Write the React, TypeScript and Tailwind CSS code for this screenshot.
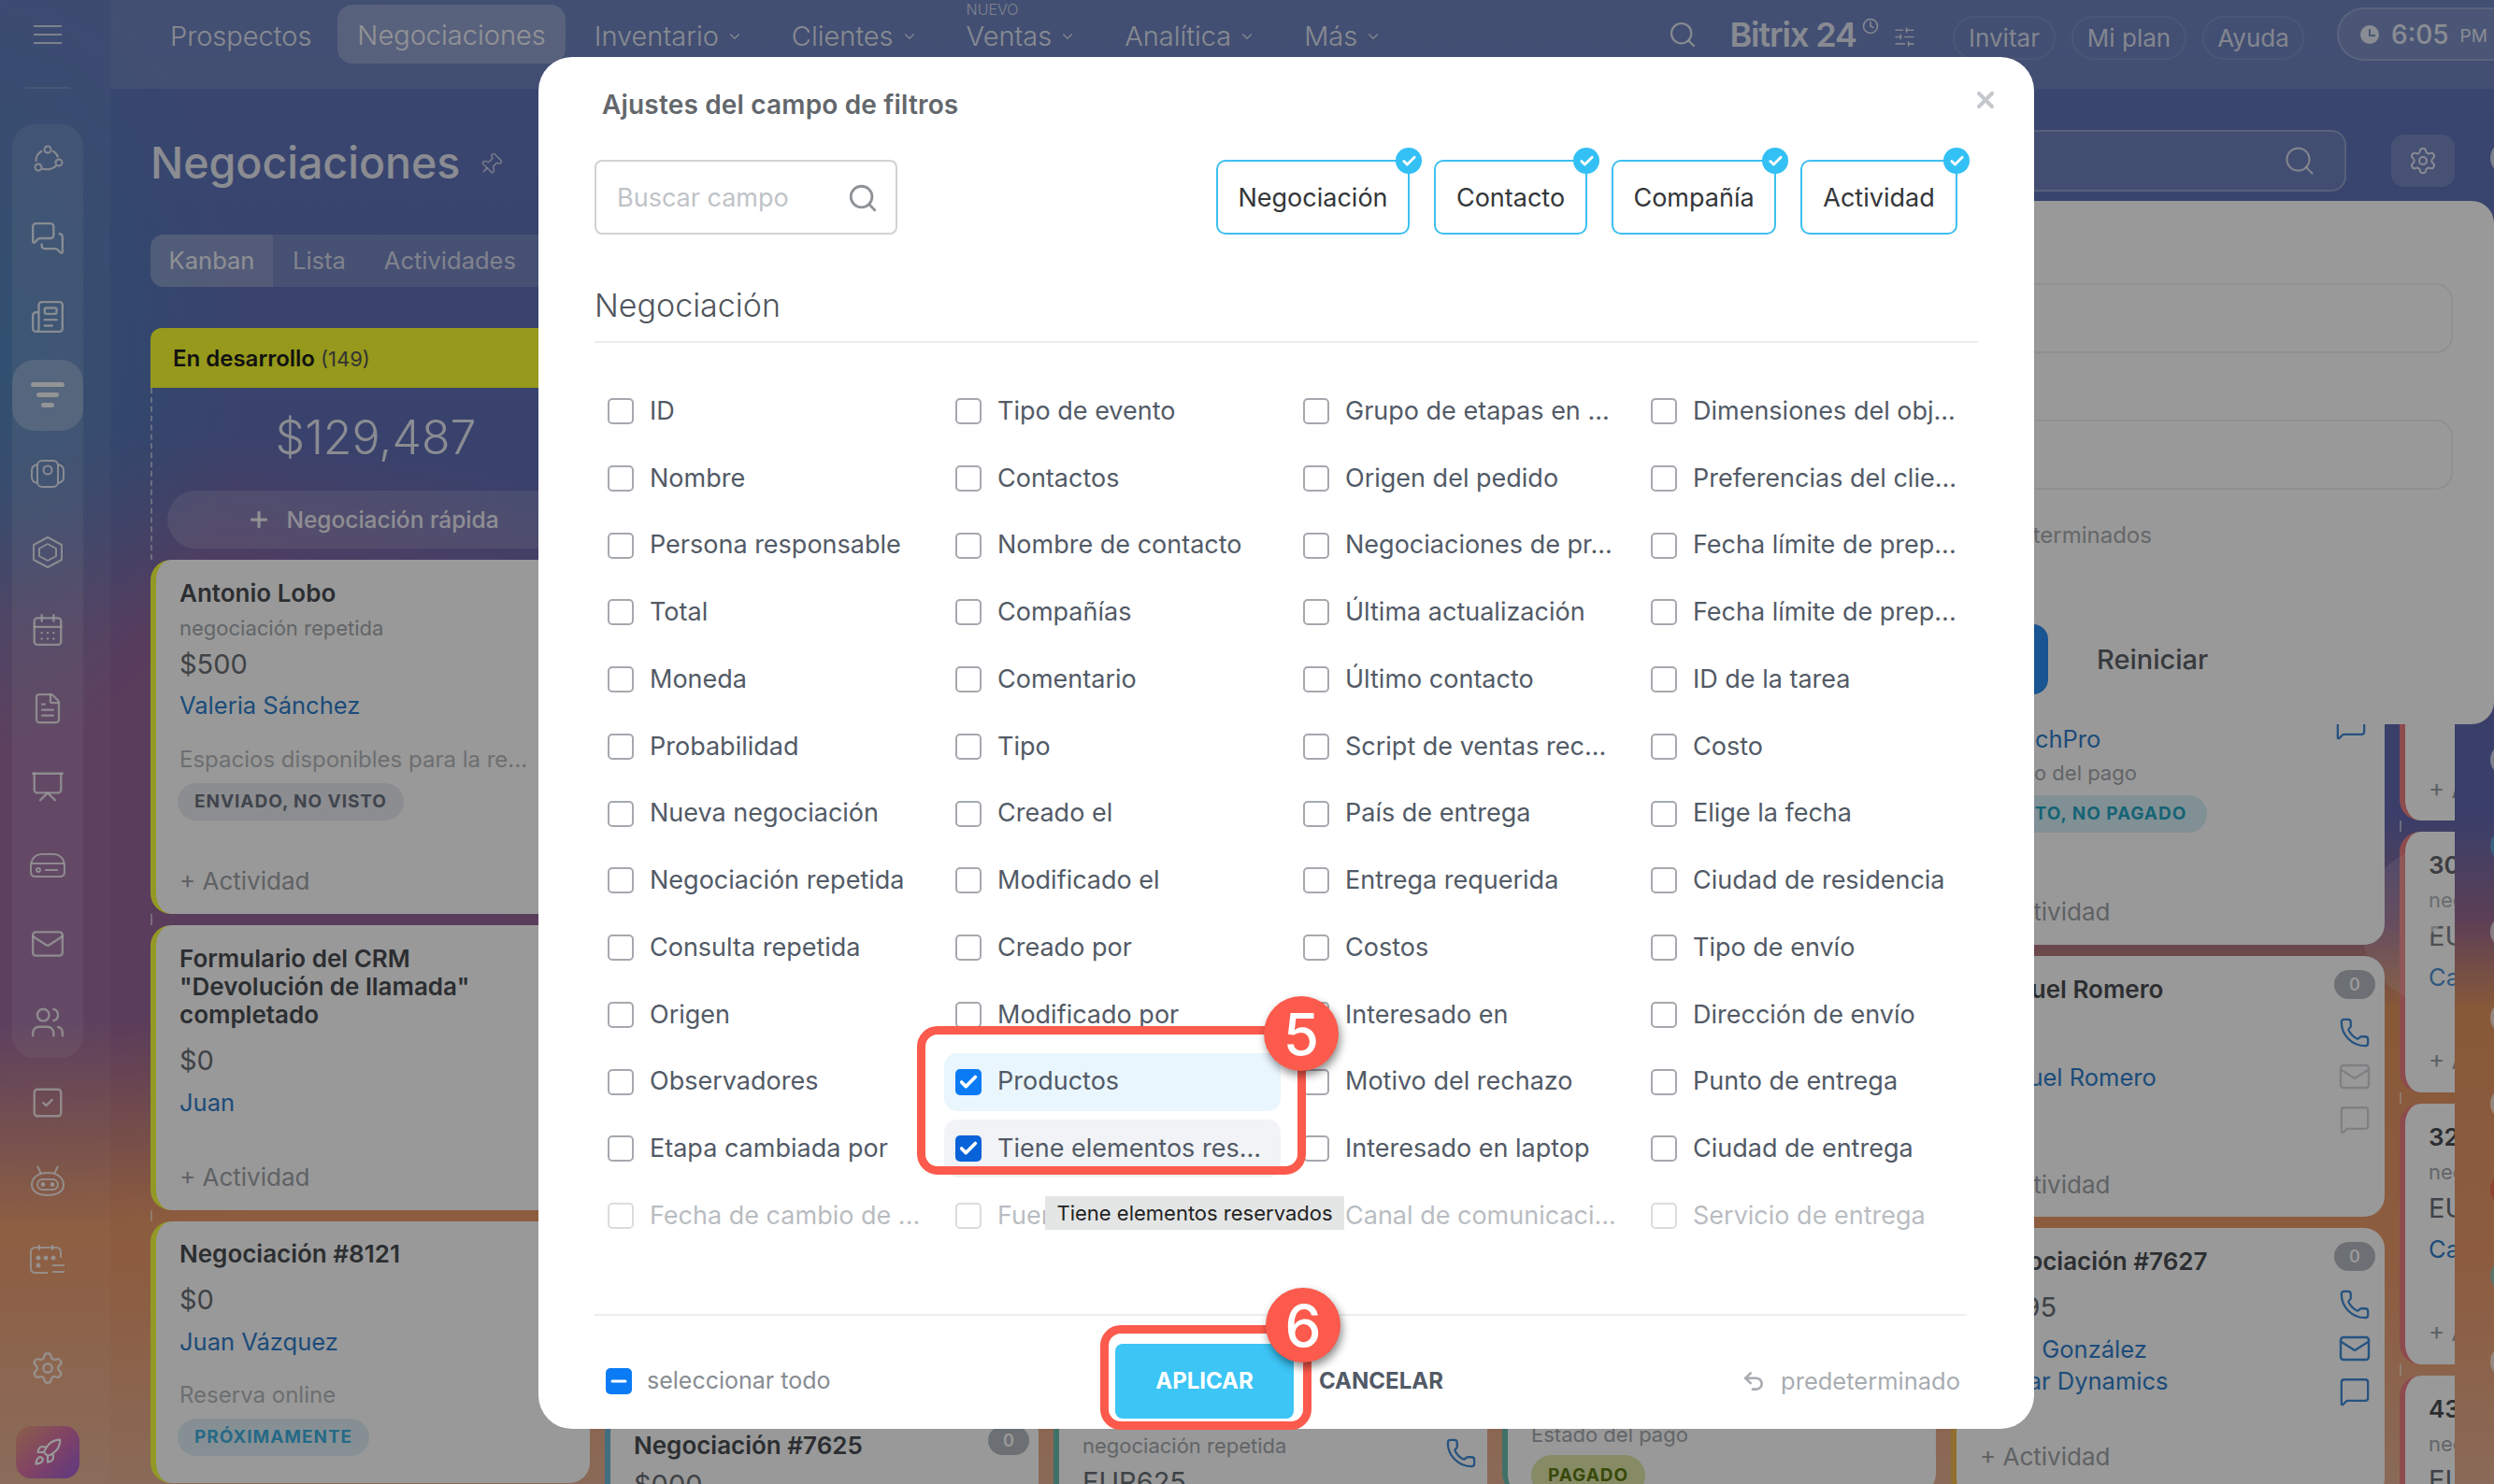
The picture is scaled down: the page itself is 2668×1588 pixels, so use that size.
import type { ReactNode } from "react";
import {
  CalendarDays,
  Check,
  ChevronDown,
  Clock,
  FileText,
  Mail,
  MessageSquare,
  MessagesSquare,
  Minus,
  Newspaper,
  Phone,
  Pin,
  Plus,
  Presentation,
  Rocket,
  Search,
  Settings,
  SlidersHorizontal,
  SquareCheck,
  Undo2,
  Users,
  X,
} from "lucide-react";

// sidebar icons that lucide has no close match for
function FeedIcon() {
  return (
    <svg width="36" height="36" viewBox="0 0 36 36" fill="none" stroke="currentColor" strokeWidth="2">
      <circle cx="18" cy="7" r="3.5" />
      <circle cx="8" cy="26" r="3.5" />
      <circle cx="30" cy="21" r="3.5" />
      <path d="M12 8.5C8 10.5 5 15 5.5 20M12 27.5c5 1.5 11 .5 15-3M23 8.5c2.5 1 5 3.5 6 7" />
    </svg>
  );
}

function FunnelIcon() {
  return (
    <svg width="36" height="32" viewBox="0 0 36 32" fill="currentColor">
      <rect x="0" y="2" width="36" height="5" rx="2.5" />
      <rect x="6" y="13" width="24" height="5" rx="2.5" />
      <rect x="11" y="24" width="14" height="5" rx="2.5" />
    </svg>
  );
}

function CameraIcon() {
  return (
    <svg width="36" height="36" viewBox="0 0 36 36" fill="none" stroke="currentColor" strokeWidth="2">
      <rect x="7" y="4" width="22" height="28" rx="5" />
      <circle cx="18" cy="14" r="4.5" />
      <path d="M7 8C3 9 1 11 1 14v8c0 3 2 5 6 6M29 8c4 1 6 3 6 6v8c0 3-2 5-6 6" />
    </svg>
  );
}

function HexIcon() {
  return (
    <svg width="36" height="36" viewBox="0 0 36 36" fill="none" stroke="currentColor" strokeWidth="2">
      <path d="M18 2l15 8v16l-15 8-15-8V10z" strokeLinejoin="round" />
      <path d="M18 9l9 5v8l-9 5-9-5v-8z" strokeLinejoin="round" />
    </svg>
  );
}

function DriveIcon() {
  return (
    <svg width="40" height="30" viewBox="0 0 40 30" fill="none" stroke="currentColor" strokeWidth="2">
      <path d="M2 16C2 8 7 3 14 3h12c7 0 12 5 12 13v6c0 3-2 5-5 5H7c-3 0-5-2-5-5z" />
      <path d="M2 13h36M17 20h14" />
      <circle cx="10" cy="20" r="2" />
    </svg>
  );
}

function RobotIcon() {
  return (
    <svg width="38" height="36" viewBox="0 0 38 36" fill="none" stroke="currentColor" strokeWidth="2">
      <path d="M8 2l4 8M30 2l-4 8" />
      <path d="M2 22c0-8 7-13 17-13s17 5 17 13c0 7-7 11-17 11S2 29 2 22z" />
      <rect x="8" y="16" width="22" height="11" rx="5.5" />
      <circle cx="14" cy="21.5" r="1.4" fill="currentColor" />
      <circle cx="24" cy="21.5" r="1.4" fill="currentColor" />
    </svg>
  );
}

function PlannerIcon() {
  return (
    <svg width="40" height="36" viewBox="0 0 40 36" fill="none" stroke="currentColor" strokeWidth="2">
      <path d="M20 32H7c-3 0-5-2-5-5V10c0-3 2-5 5-5h22c3 0 5 2 5 5v6" />
      <path d="M11 2v6M25 2v6M25 24h13M25 31h13" />
      <circle cx="10" cy="16" r="1.5" fill="currentColor" />
      <circle cx="18" cy="16" r="1.5" fill="currentColor" />
      <circle cx="26" cy="16" r="1.5" fill="currentColor" />
      <circle cx="10" cy="24" r="1.5" fill="currentColor" />
    </svg>
  );
}

function Rail({ children, active }: { children: ReactNode; active?: boolean }) {
  return (
    <div className={active ? "h-[76px] rounded-[24px] bg-white/25 flex items-center justify-center text-white/90" : "h-[76px] rounded-[24px] flex items-center justify-center text-white/80"}>
      {children}
    </div>
  );
}

function NavItem({ label, badge }: { label: string; badge?: string }) {
  return (
    <div className="relative ml-[10px] flex items-center gap-[8px] px-[21px] h-[68px] text-[29px] text-white/80 font-light">
      {badge && <span className="absolute left-[21px] top-[-4px] text-[16px] leading-[18px] text-white/70">{badge}</span>}
      {label}
      <ChevronDown size={18} strokeWidth={1.5} />
    </div>
  );
}

function TopPill({ label, w }: { label: string; w: string }) {
  return (
    <div className={`${w} h-[47px] flex items-center justify-center rounded-full border-2 border-white/10 text-[26px] text-white/75 mt-[6px]`}>
      {label}
    </div>
  );
}

function Gap({ dashed }: { dashed?: boolean }) {
  return <div className={dashed ? "h-[12px] shrink-0 border-l-2 border-dashed border-white/50" : "h-[12px] shrink-0"} />;
}

function Card({ stripe, h, children }: { stripe: string; h: string; children: ReactNode }) {
  return <div className={`${h} ${stripe} relative shrink-0 bg-white rounded-[22px] border-l-[6px] pl-[25px] pr-[10px] overflow-hidden`}>{children}</div>;
}

function Title({ children, className = "" }: { children: ReactNode; className?: string }) {
  return <div className={`text-[26px] leading-[30px] font-semibold text-[#4a4d52] whitespace-nowrap ${className}`}>{children}</div>;
}
function Sub({ children, className = "" }: { children: ReactNode; className?: string }) {
  return <div className={`text-[22px] leading-[28px] text-[#a3a8ad] whitespace-nowrap ${className}`}>{children}</div>;
}
function Note({ children, className = "" }: { children: ReactNode; className?: string }) {
  return <div className={`text-[24px] leading-[28px] text-[#b5b9bd] whitespace-nowrap ${className}`}>{children}</div>;
}
function Amount({ children, className = "" }: { children: ReactNode; className?: string }) {
  return <div className={`text-[29px] leading-[34px] text-[#6a6f75] ${className}`}>{children}</div>;
}
function Person({ children, className = "" }: { children: ReactNode; className?: string }) {
  return <div className={`text-[25.5px] leading-[34px] text-[#2f7ecb] whitespace-nowrap ${className}`}>{children}</div>;
}
function Act({ className = "" }: { className?: string }) {
  return <div className={`text-[26px] leading-[30px] text-[#9ea3a8] whitespace-nowrap ${className}`}>+ Actividad</div>;
}
function Tag({ children, tone, className = "" }: { children: ReactNode; tone: string; className?: string }) {
  return <div className={`h-[40px] inline-flex items-center px-[18px] rounded-full text-[19px] font-bold tracking-[0.05em] whitespace-nowrap ${tone} ${className}`}>{children}</div>;
}

function CardIcons({ active }: { active?: boolean }) {
  const rest = active ? "text-[#3f8ad6]" : "text-[#d3d6da]";
  return (
    <div className="absolute right-[10px] top-[15px] w-[44px] flex flex-col items-center text-[#3f8ad6]">
      <div className="w-[44px] h-[31px] rounded-full bg-[#b5bac1] text-white text-[18px] font-semibold flex items-center justify-center">0</div>
      <Phone size={34} strokeWidth={1.6} className="mt-[19px]" />
      <Mail size={36} strokeWidth={1.6} className={`mt-[12px] ${rest}`} />
      <MessageSquare size={34} strokeWidth={1.6} className={`mt-[11px] ${rest}`} />
    </div>
  );
}

function Field({ label, state, faded }: { label: string; state?: "on" | "hover"; faded?: boolean }) {
  let cell = "h-[62px] rounded-[14px] pl-[12px] flex items-center gap-[17px] min-w-0";
  if (state === "on") cell += " bg-[#e9f6fd]";
  if (state === "hover") cell += " bg-[#f1f3f6]";
  if (faded) cell += " opacity-40";
  let box = "w-[28px] h-[28px] shrink-0 rounded-[5px] border-2 border-[#a5a9ae] bg-white";
  if (state === "on") box = "w-[28px] h-[28px] shrink-0 rounded-[5px] bg-[#0b7bf5] flex items-center justify-center";
  if (state === "hover") box = "w-[28px] h-[28px] shrink-0 rounded-[5px] bg-[#0a62d8] flex items-center justify-center";
  return (
    <div className={cell}>
      <div className={box}>{state && <Check size={22} strokeWidth={4} className="text-white" />}</div>
      <span className="text-[27px] text-[#525a66] whitespace-nowrap">{label}</span>
    </div>
  );
}

function Entity({ label, w }: { label: string; w: string }) {
  return (
    <div className={`${w} h-[80px] relative rounded-[10px] border-2 border-[#3cc0f0] flex items-center justify-center pt-[2px] text-[27px] text-[#333639]`}>
      {label}
      <div className="absolute right-[-15px] top-[-15px] w-[28px] h-[28px] rounded-full bg-[#33c0f5] flex items-center justify-center">
        <Check size={17} strokeWidth={4} className="text-white" />
      </div>
    </div>
  );
}

const fields: string[][] = [
  ["ID", "Tipo de evento", "Grupo de etapas en ...", "Dimensiones del obj..."],
  ["Nombre", "Contactos", "Origen del pedido", "Preferencias del clie..."],
  ["Persona responsable", "Nombre de contacto", "Negociaciones de pr...", "Fecha límite de prep..."],
  ["Total", "Compañías", "Última actualización", "Fecha límite de prep..."],
  ["Moneda", "Comentario", "Último contacto", "ID de la tarea"],
  ["Probabilidad", "Tipo", "Script de ventas rec...", "Costo"],
  ["Nueva negociación", "Creado el", "País de entrega", "Elige la fecha"],
  ["Negociación repetida", "Modificado el", "Entrega requerida", "Ciudad de residencia"],
  ["Consulta repetida", "Creado por", "Costos", "Tipo de envío"],
  ["Origen", "Modificado por", "Interesado en", "Dirección de envío"],
  ["Observadores", "Productos", "Motivo del rechazo", "Punto de entrega"],
  ["Etapa cambiada por", "Tiene elementos res...", "Interesado en laptop", "Ciudad de entrega"],
  ["Fecha de cambio de ...", "Fuente", "Canal de comunicaci...", "Servicio de entrega"],
];

function Marker({ n, className }: { n: string; className: string }) {
  return (
    <div className={`absolute w-[80px] h-[80px] rounded-full bg-[#fb5a4c] text-white text-[62px] font-medium flex items-center justify-center shadow-[2px_5px_10px_rgba(0,0,0,0.45)] ${className}`}>
      {n}
    </div>
  );
}

export default function App() {
  return (
    <div className="relative w-[2668px] h-[1588px] overflow-hidden font-[Inter,sans-serif] bg-[radial-gradient(ellipse_260px_420px_at_0px_380px,#4a80b8_0%,transparent_100%),radial-gradient(ellipse_1100px_430px_at_0px_880px,#96649a_0%,#96649a_50%,transparent_100%),linear-gradient(180deg,#5f76b9_0%,#6168b0_55%,#9a6a8f_62%,#e2955f_68%,#eb9a6b_85%,#e6b193_100%)]">
      {/* page behind the dialog */}
      <div className="flex h-full">
        <aside className="w-[118px] shrink-0 bg-white/5 flex flex-col">
          <div className="ml-[27px] w-[48px] h-[95px] flex items-center justify-center pb-[20px] text-white/70 border-b-2 border-white/15">
            <div className="w-[30px] flex flex-col gap-[7px]">
              <div className="h-[2px] bg-current" />
              <div className="h-[2px] bg-current" />
              <div className="h-[2px] bg-current" />
            </div>
          </div>
          <div className="ml-[13px] w-[76px] mt-[38px] h-[999px] rounded-[24px] bg-white/10 flex flex-col gap-[8px] text-white/80">
            <Rail><FeedIcon /></Rail>
            <Rail><MessagesSquare size={38} strokeWidth={1.5} /></Rail>
            <Rail><Newspaper size={38} strokeWidth={1.5} /></Rail>
            <Rail active><FunnelIcon /></Rail>
            <Rail><CameraIcon /></Rail>
            <Rail><HexIcon /></Rail>
            <Rail><CalendarDays size={38} strokeWidth={1.5} /></Rail>
            <Rail><FileText size={36} strokeWidth={1.5} /></Rail>
            <Rail><Presentation size={38} strokeWidth={1.5} /></Rail>
            <Rail><DriveIcon /></Rail>
            <Rail><Mail size={38} strokeWidth={1.5} /></Rail>
            <Rail><Users size={38} strokeWidth={1.5} /></Rail>
          </div>
          <div className="ml-[13px] w-[76px] mt-[10px] flex flex-col gap-[8px]">
            <Rail><SquareCheck size={38} strokeWidth={1.5} /></Rail>
            <Rail><RobotIcon /></Rail>
            <Rail><PlannerIcon /></Rail>
          </div>
          <div className="ml-[13px] w-[76px] mt-[40px]">
            <Rail><Settings size={38} strokeWidth={1.5} /></Rail>
          </div>
          <div className="ml-[17px] w-[68px] mt-[24px] h-[56px] rounded-[16px] bg-[linear-gradient(135deg,#e8a07a,#d870a8,#9a60d8)] flex items-center justify-center text-white">
            <Rocket size={32} strokeWidth={1.6} />
          </div>
        </aside>

        <div className="flex-1 min-w-0 flex flex-col">
          <header className="h-[95px] shrink-0 bg-white/10 flex items-start pt-[5px] pl-[43px] overflow-hidden">
            <div className="flex items-center h-[68px] px-[21px] text-[29px] text-white/80 font-light">Prospectos</div>
            <div className="ml-[7px] h-[63px] px-[21px] pt-[2px] rounded-[16px] bg-white/25 flex items-center text-[29px] text-white/90 font-light">Negociaciones</div>
            <NavItem label="Inventario" />
            <NavItem label="Clientes" />
            <NavItem label="Ventas" badge="NUEVO" />
            <NavItem label="Analítica" />
            <NavItem label="Más" />
            <div className="ml-auto flex items-start">
              <Search size={32} strokeWidth={1.6} className="text-white/80 mt-[16px] mr-[34px]" />
              <div className="text-[36px] leading-[64px] font-semibold text-white/80 tracking-[-0.03em]">Bitrix 24</div>
              <Clock size={18} strokeWidth={2} className="text-white/80 mt-[14px] ml-[6px]" />
              <SlidersHorizontal size={25} strokeWidth={1.6} className="text-white/70 mt-[22px] ml-[15px] mr-[39px]" />
              <div className="flex gap-[17px] mt-[6px]">
                <TopPill label="Invitar" w="w-[110px]" />
                <TopPill label="Mi plan" w="w-[123px]" />
                <TopPill label="Ayuda" w="w-[109px]" />
              </div>
              <div className="ml-[35px] mt-[3px] w-[168px] h-[57px] rounded-l-full bg-white/10 border-2 border-r-0 border-white/20 pl-[22px] flex items-center gap-[12px] text-white/80">
                <svg width="22" height="22" viewBox="0 0 22 22" fill="currentColor">
                  <path d="M11 1a10 10 0 1 0 0 20 10 10 0 0 0 0-20zm1 10h5v2h-7V5h2z" fillRule="evenodd" />
                </svg>
                <span className="text-[28px] font-medium">6:05</span>
                <span className="text-[19px] mt-[6px]">PM</span>
              </div>
            </div>
          </header>

          <div className="flex flex-1 min-h-0">
            <main className="w-[2508px] shrink-0 pl-[43px] flex flex-col overflow-hidden">
              <div className="mt-[44px] h-[66px] shrink-0 flex items-center">
                <h1 className="text-[46.5px] pt-[5px] font-medium text-white/85">Negociaciones</h1>
                <Pin size={26} strokeWidth={1.5} className="ml-[20px] mt-[8px] rotate-45 text-white/60" />
                <div className="ml-auto w-[500px] h-[66px] rounded-[16px] bg-white/10 border-2 border-white/25 flex items-center justify-end pr-[30px] text-white/70">
                  <Search size={36} strokeWidth={1.5} />
                </div>
                <div className="ml-[48px] w-[68px] h-[56px] rounded-[14px] bg-white/15 flex items-center justify-center text-white/80">
                  <Settings size={32} strokeWidth={1.5} />
                </div>
              </div>

              <div className="mt-[46px] h-[56px] shrink-0 w-[500px] rounded-[14px] bg-white/15 flex items-center text-[25.5px] text-white/70">
                <div className="h-full w-[131px] rounded-l-[14px] bg-white/15 flex items-center justify-center text-white/85">Kanban</div>
                <span className="ml-[21px]">Lista</span>
                <span className="ml-[41px]">Actividades</span>
              </div>

              <div className="mt-[44px] flex-1 min-h-0 flex gap-[16px]">
                {/* En desarrollo */}
                <div className="w-[470px] shrink-0 flex flex-col">
                  <div className="h-[64px] shrink-0 rounded-t-[12px] bg-[#fbff2e] flex items-center pl-[24px] pt-[2px] text-[24px]">
                    <span className="font-semibold text-[#1d1d1d]">En desarrollo</span>
                    <span className="ml-[6px] text-[#555] text-[22px]">(149)</span>
                  </div>
                  <div className="h-[184px] shrink-0 border-l-2 border-dashed border-white/50 flex flex-col">
                    <div className="h-[106px] mb-[4px] flex items-center justify-center pl-[10px] text-[50px] font-light text-white/85">$129,487</div>
                    <div className="ml-[16px] h-[62px] rounded-full bg-white/15 flex items-center justify-center pr-[12px] gap-[16px] text-[24.5px] font-medium text-white/85">
                      <Plus size={26} strokeWidth={3} />
                      Negociación rápida
                    </div>
                  </div>
                  <Card stripe="border-[#f4ff3d]" h="h-[379px]">
                    <Title className="pt-[21px]">Antonio Lobo</Title>
                    <Sub className="mt-[8px]">negociación repetida</Sub>
                    <Amount className="mt-[8px]">$500</Amount>
                    <Person className="mt-[10px]">Valeria Sánchez</Person>
                    <Note className="mt-[27px]">Espacios disponibles para la re...</Note>
                    <Tag tone="bg-[#e9ecf0] text-[#6b7280]" className="mt-[11px] ml-[-2px]">ENVIADO, NO VISTO</Tag>
                    <Act className="mt-[50px]" />
                  </Card>
                  <Gap dashed />
                  <Card stripe="border-[#f4ff3d]" h="h-[305px]">
                    <Title className="pt-[21px]">Formulario del CRM<br />"Devolución de llamada"<br />completado</Title>
                    <Amount className="mt-[17px]">$0</Amount>
                    <Person className="mt-[11px]">Juan</Person>
                    <Act className="mt-[48px]" />
                  </Card>
                  <Gap dashed />
                  <Card stripe="border-[#f4ff3d]" h="h-[280px]">
                    <Title className="pt-[20px]">Negociación #8121</Title>
                    <Amount className="mt-[17px]">$0</Amount>
                    <Person className="mt-[11px]">Juan Vázquez</Person>
                    <Note className="mt-[26px]">Reserva online</Note>
                    <Tag tone="bg-[#dff1f7] text-[#3fb0e0]" className="mt-[11px] ml-[-2px]">PRÓXIMAMENTE</Tag>
                  </Card>
                </div>

                {/* columns that only show below the dialog */}
                <div className="w-[464px] shrink-0 flex flex-col pt-[248px]">
                  <Card stripe="border-[#6db7d6]" h="h-[900px]"><span /></Card>
                  <Gap />
                  <Card stripe="border-[#6db7d6]" h="h-[200px]">
                    <Title className="pt-[21px]">Negociación #7625</Title>
                    <Amount className="mt-[10px]">$000</Amount>
                    <div className="absolute right-[10px] top-[15px] w-[44px] h-[31px] rounded-full bg-[#b5bac1] text-white text-[18px] font-semibold flex items-center justify-center">0</div>
                  </Card>
                </div>
                <div className="w-[464px] shrink-0 flex flex-col pt-[248px]">
                  <Card stripe="border-[#6bbdb0]" h="h-[863px]"><span /></Card>
                  <Gap />
                  <Card stripe="border-[#6bbdb0]" h="h-[200px]">
                    <Title className="pt-[21px]">Negociación</Title>
                    <Sub className="mt-[8px]">negociación repetida</Sub>
                    <Amount className="mt-[8px]">EUR625</Amount>
                    <Phone size={34} strokeWidth={1.6} className="absolute right-[11px] top-[64px] text-[#3f8ad6]" />
                  </Card>
                </div>
                <div className="w-[464px] shrink-0 flex flex-col pt-[248px]">
                  <Card stripe="border-[#6bbdb0]" h="h-[1000px]">
                    <div className="h-[922px]" />
                    <Sub>Estado del pago</Sub>
                    <Tag tone="bg-[#dfe8a8] text-[#5d7a10]" className="mt-[8px] h-[44px]">PAGADO</Tag>
                  </Card>
                </div>
                <div className="w-[464px] shrink-0 flex flex-col pt-[248px]">
                  <Card stripe="border-[#f0b84c]" h="h-[412px]">
                    <Person className="mt-[175px]">LaunchPro</Person>
                    <Sub className="mt-[5px]">Estado del pago</Sub>
                    <Tag tone="bg-[#d7f1f8] text-[#26a6c4]" className="mt-[10px] ml-[6px] pr-[22px]">VISTO, NO PAGADO</Tag>
                    <Act className="mt-[70px]" />
                    <MessageSquare size={34} strokeWidth={1.6} className="absolute right-[19px] top-[160px] text-[#3f8ad6]" />
                  </Card>
                  <Gap />
                  <Card stripe="border-[#f0b84c]" h="h-[279px]">
                    <Title className="pt-[21px]">Manuel Romero</Title>
                    <Amount className="mt-[16px]">$0</Amount>
                    <Person className="mt-[12px]">Manuel Romero</Person>
                    <Act className="mt-[83px]" />
                    <CardIcons />
                  </Card>
                  <Gap />
                  <Card stripe="border-[#f0b84c]" h="h-[290px]">
                    <Title className="pt-[21px]">Negociación #7627</Title>
                    <Amount className="mt-[17px]">$1795</Amount>
                    <Person className="mt-[11px]">Rosa González<br />Stellar Dynamics</Person>
                    <Act className="mt-[49px]" />
                    <CardIcons active />
                  </Card>
                </div>
                <div className="w-[464px] shrink-0 flex flex-col pt-[248px]">
                  <Card stripe="border-[#ec7e80]" h="h-[279px]">
                    <Act className="mt-[231px]" />
                  </Card>
                  <Gap dashed />
                  <Card stripe="border-[#ec7e80]" h="h-[279px]">
                    <Title className="pt-[21px]">30</Title>
                    <Sub className="mt-[8px]">negociación repetida</Sub>
                    <Amount className="mt-[8px]">EUR</Amount>
                    <Person className="mt-[10px]">Carlos</Person>
                    <Act className="mt-[57px]" />
                  </Card>
                  <Gap dashed />
                  <Card stripe="border-[#ec7e80]" h="h-[279px]">
                    <Title className="pt-[21px]">32</Title>
                    <Sub className="mt-[8px]">negociación repetida</Sub>
                    <Amount className="mt-[8px]">EUR</Amount>
                    <Person className="mt-[10px]">Carlos</Person>
                    <Act className="mt-[57px]" />
                  </Card>
                  <Gap dashed />
                  <Card stripe="border-[#ec7e80]" h="h-[279px]">
                    <Title className="pt-[21px]">43</Title>
                    <Sub className="mt-[8px]">negociación repetida</Sub>
                    <Amount className="mt-[8px]">EUR</Amount>
                  </Card>
                </div>
              </div>
            </main>

            <div className="w-[42px] shrink-0 flex flex-col gap-[56px] pt-[56px] pl-[38px] overflow-hidden">
              {["#fff", "#fff", "#fff", "#fff", "#fff", "#fff", "#fff", "#fff", "#5ab8e6", "#fff", "#fff", "#fff", "#f0604c", "#7ad0c8", "#fff"].map((c, i) => (
                <div key={i} className="w-[36px] h-[36px] shrink-0 rounded-full opacity-70" style={{ backgroundColor: c }} />
              ))}
            </div>
          </div>
        </div>
      </div>

      {/* popup and stage arrow that sit over the kanban */}
      <div className="absolute left-[2526px] top-[904px] w-[100px] h-[172px] overflow-hidden">
        <div className="w-[172px] h-[172px] rounded-full bg-white/15 flex items-center pl-[47px] text-white/60">
          <svg width="36" height="56" viewBox="0 0 36 56" fill="none" stroke="currentColor" strokeWidth="8">
            <path d="M3 3l29 25L3 53" />
          </svg>
        </div>
      </div>
      <div className="absolute left-[2060px] top-[215px] w-[608px] h-[560px] rounded-[24px] bg-white pl-[48px] pr-[44px] pt-[88px]">
        <div className="h-[75px] rounded-[18px] border-2 border-[#f0f1f2]" />
        <div className="mt-[71px] h-[75px] rounded-[18px] border-2 border-[#f0f1f2]" />
        <div className="mt-[31px] text-[24px] text-[#a8acb0]">Predeterminados</div>
        <div className="mt-[77px] flex items-center">
          <div className="w-[83px] h-[75px] rounded-[16px] bg-[#2b8cf5]" />
          <span className="ml-[52px] text-[29px] font-medium text-[#5d6167]">Reiniciar</span>
        </div>
      </div>

      <div className="absolute inset-0 bg-black/40" />

      {/* filter field settings dialog */}
      <div className="absolute left-[576px] top-[61px] w-[1600px] h-[1468px] rounded-[36px] bg-white pl-[60px] flex flex-col">
        <div className="h-[110px] shrink-0 flex items-center pb-[8px] pl-[8px] text-[28px] tracking-[0.006em] font-semibold text-[#63676c]">Ajustes del campo de filtros</div>
        <X size={28} strokeWidth={3.5} className="absolute right-[38px] top-[32px] text-[#c4c7cc]" />

        <div className="h-[80px] shrink-0 flex items-center pr-[82px]">
          <div className="w-[324px] h-[80px] rounded-[8px] border-2 border-[#d0d2d6] flex items-center justify-between pl-[22px] pr-[18px] pt-[2px] text-[27px] text-[#c0c3c8]">
            Buscar campo
            <Search size={34} strokeWidth={2} className="text-[#8f9397]" />
          </div>
          <div className="ml-auto flex gap-[26px]">
            <Entity label="Negociación" w="w-[207px]" />
            <Entity label="Contacto" w="w-[164px]" />
            <Entity label="Compañía" w="w-[176px]" />
            <Entity label="Actividad" w="w-[168px]" />
          </div>
        </div>

        <div className="mt-[54px] w-[1480px] pb-[16px] border-b-2 border-[#eeeeee] text-[34px] leading-[44px] font-light text-[#50555c]">Negociación</div>

        <div className="mt-[42px] ml-[2px] grid grid-cols-[repeat(4,360px)] gap-x-[12px] gap-y-[9.75px]">
          {fields.map((row, r) =>
            row.map((label, c) => (
              <Field
                key={label + r}
                label={label}
                state={r === 10 && c === 1 ? "on" : r === 11 && c === 1 ? "hover" : undefined}
                faded={r === 12}
              />
            ))
          )}
        </div>

        <div className="mt-[74px] w-[1468px] border-t-2 border-[#eeeeee] h-[123px] pt-[19px] flex items-center">
          <div className="w-[557px] pl-[12px] flex items-center gap-[16px] text-[25px] text-[#878c92]">
            <div className="w-[28px] h-[28px] rounded-[5px] bg-[#0b7bf5] flex items-center justify-center">
              <Minus size={24} strokeWidth={3} className="text-white" />
            </div>
            seleccionar todo
          </div>
          <div className="w-[191px] h-[80px] rounded-[8px] bg-[#3cc5f5] flex items-center justify-center text-[24px] font-bold text-white">APLICAR</div>
          <div className="ml-[27px] text-[24px] font-bold text-[#525a66]">CANCELAR</div>
          <div className="ml-auto pr-[7px] flex items-center gap-[16px] text-[25.5px] text-[#a8acb2]">
            <Undo2 size={26} strokeWidth={2.4} />
            predeterminado
          </div>
        </div>
      </div>

      {/* tooltip and screenshot annotations */}
      <div className="absolute left-[1118px] top-[1280px] w-[320px] h-[36px] bg-[#e4e5e5] flex items-center justify-center text-[22px] text-[#222222] whitespace-nowrap">Tiene elementos reservados</div>
      <div className="absolute left-[981px] top-[1098px] w-[416px] h-[159px] rounded-[22px] border-[9px] border-[#fb5a4c]" />
      <div className="absolute left-[1177px] top-[1418px] w-[226px] h-[112px] rounded-[22px] border-[9px] border-[#fb5a4c]" />
      <Marker n="5" className="left-[1352px] top-[1066px]" />
      <Marker n="6" className="left-[1354px] top-[1378px]" />
    </div>
  );
}
